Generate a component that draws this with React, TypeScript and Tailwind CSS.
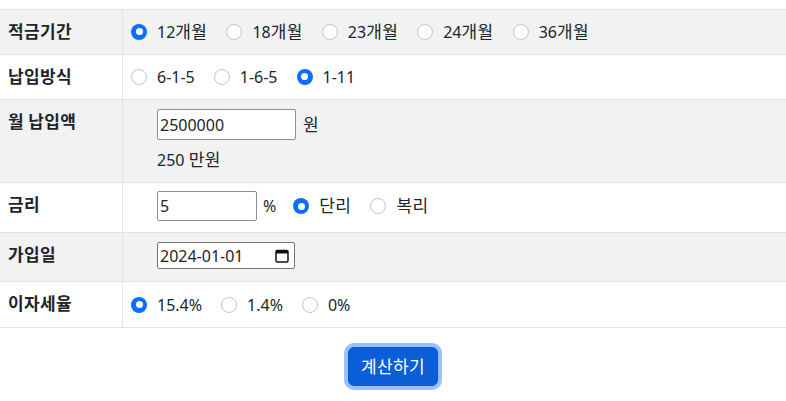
import React from "react";

const font = { fontFamily: '"Noto Sans", "Noto Sans CJK KR", sans-serif' };

function K({ t }: { t: string }) {
  const parts = t.split(/([\uac00-\ud7a3]+)/);
  return (
    <>
      {parts.map((p, i) =>
        /[\uac00-\ud7a3]/.test(p) ? (
          <span key={i} className="text-[17px] tracking-[0.4px]">
            {p}
          </span>
        ) : (
          <span key={i}>{p}</span>
        )
      )}
    </>
  );
}

function Radio({ checked, label }: { checked?: boolean; label: string }) {
  return (
    <div className="flex items-center mr-[19px]">
      {checked ? (
        <span className="w-4 h-4 rounded-full bg-[#0d6efd] flex items-center justify-center">
          <span className="w-[7px] h-[7px] rounded-full bg-white" />
        </span>
      ) : (
        <span className="w-4 h-4 rounded-full bg-white border border-[#c4c4c4]" />
      )}
      <span className="ml-[10px] leading-6">
        <K t={label} />
      </span>
    </div>
  );
}

function Label({ children }: { children: string }) {
  return (
    <div className="w-[123px] shrink-0 border-r border-[#e4e4e4] pl-2 pt-[10px] font-bold leading-6">
      <K t={children} />
    </div>
  );
}

export default function App() {
  return (
    <div className="w-[786px] h-[401px] bg-white text-[16px] text-[#212529]" style={font}>
      <div className="pt-[9px]">
        <div className="border-t border-[#dee2e6]">
          {/* Row 1 */}
          <div className="flex h-[45px] bg-[#f2f2f2] border-b border-[#dee2e6]">
            <Label>적금기간</Label>
            <div className="flex items-center pl-2 pb-[1px]">
              <Radio checked label="12개월" />
              <Radio label="18개월" />
              <Radio label="23개월" />
              <Radio label="24개월" />
              <Radio label="36개월" />
            </div>
          </div>
          {/* Row 2 */}
          <div className="flex h-[45px] bg-white border-b border-[#dee2e6]">
            <Label>납입방식</Label>
            <div className="flex items-center pl-2 pb-[1px]">
              <Radio label="6-1-5" />
              <Radio label="1-6-5" />
              <Radio checked label="1-11" />
            </div>
          </div>
          {/* Row 3 */}
          <div className="flex h-[83px] bg-[#f2f2f2] border-b border-[#dee2e6]">
            <Label>월 납입액</Label>
            <div className="flex flex-col pl-[34px] pt-[9px]">
              <div className="flex items-center">
                <input
                  readOnly
                  value="2500000"
                  className="w-[139px] h-[31px] bg-white border border-[#8f8f8f] rounded-[2px] px-[2px] outline-none"
                  style={font}
                />
                <span className="ml-[7px]">
                  <K t="원" />
                </span>
              </div>
              <div className="mt-[8px] leading-6">
                <K t="250 만원" />
              </div>
            </div>
          </div>
          {/* Row 4 */}
          <div className="flex h-[50px] bg-white border-b border-[#dee2e6]">
            <Label>금리</Label>
            <div className="flex items-center pl-[34px] pt-[8px] self-start">
              <input
                readOnly
                value="5"
                className="w-[100px] h-[30px] bg-white border border-[#8f8f8f] rounded-[2px] px-[2px] outline-none"
                style={font}
              />
              <span className="ml-[6px] mr-[17px]">%</span>
              <Radio checked label="단리" />
              <Radio label="복리" />
            </div>
          </div>
          {/* Row 5 */}
          <div className="flex h-[49px] bg-[#f2f2f2] border-b border-[#dee2e6]">
            <Label>가입일</Label>
            <div className="pl-[34px] pt-[9px]">
              <div className="w-[138px] h-[27px] bg-white border border-[#767676] rounded-[2px] flex items-center pl-[2px] pr-[5px] justify-between">
                <span>2024-01-01</span>
                <svg width="14" height="14" viewBox="0 0 14 14">
                  <rect x="1" y="1.5" width="12" height="11.5" rx="1.2" fill="none" stroke="#111" strokeWidth="1.5" />
                  <rect x="1" y="1.5" width="12" height="3" fill="#111" />
                </svg>
              </div>
            </div>
          </div>
          {/* Row 6 */}
          <div className="flex h-[46px] bg-white border-b border-[#dee2e6]">
            <Label>이자세율</Label>
            <div className="flex items-center pl-2">
              <Radio checked label="15.4%" />
              <Radio label="1.4%" />
              <Radio label="0%" />
            </div>
          </div>
        </div>
        <div className="flex justify-center mt-[19px]">
          <button
            className="h-[39px] px-3 rounded-[6px] bg-[#0b5ed7] border border-[#0a58ca] text-white shadow-[0_0_0_4px_rgba(49,132,253,0.5)] leading-6"
            style={font}
          >
            <K t="계산하기" />
          </button>
        </div>
      </div>
    </div>
  );
}
